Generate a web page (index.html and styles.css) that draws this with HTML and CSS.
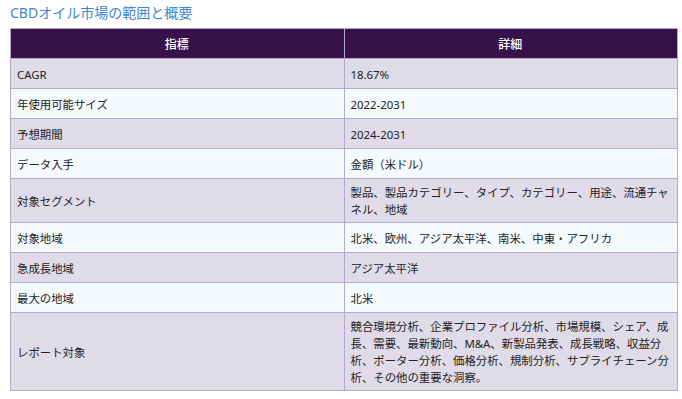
FILE: index.html
```html
<!DOCTYPE html>
<html lang="ja">
<head>
<meta charset="utf-8">
<title>CBDオイル市場の範囲と概要</title>
<link rel="stylesheet" href="styles.css">
</head>
<body>
<div class="page">
  <h2 class="title">CBDオイル市場の範囲と概要</h2>
  <table class="scope">
    <thead>
      <tr><th>指標</th><th>詳細</th></tr>
    </thead>
    <tbody>
      <tr><td>CAGR</td><td>18.67%</td></tr>
      <tr><td>年使用可能サイズ</td><td>2022-2031</td></tr>
      <tr><td>予想期間</td><td>2024-2031</td></tr>
      <tr><td>データ入手</td><td>金額（米ドル）</td></tr>
      <tr><td>対象セグメント</td><td>製品、製品カテゴリー、タイプ、カテゴリー、用途、流通チャネル、地域</td></tr>
      <tr><td>対象地域</td><td>北米、欧州、アジア太平洋、南米、中東・アフリカ</td></tr>
      <tr><td>急成長地域</td><td>アジア太平洋</td></tr>
      <tr><td>最大の地域</td><td>北米</td></tr>
      <tr><td>レポート対象</td><td>競合環境分析、企業プロファイル分析、市場規模、シェア、成長、需要、最新動向、M&amp;A、新製品発表、成長戦略、収益分析、ポーター分析、価格分析、規制分析、サプライチェーン分析、その他の重要な洞察。</td></tr>
    </tbody>
  </table>
</div>
</body>
</html>
```

FILE: styles.css
```css
html, body {
  margin: 0;
  padding: 0;
  background: #ffffff;
}

.page {
  padding: 3px 4px 0 10px;
  font-family: "Noto Sans", "Noto Sans CJK JP", sans-serif;
}

.title {
  margin: 0 0 5px 0;
  font-size: 14px;
  line-height: 20px;
  font-weight: normal;
  color: #3f86cf;
}

.scope {
  width: 668px;
  border-collapse: collapse;
  table-layout: fixed;
  font-size: 11.4px;
  line-height: 17px;
  color: #222222;
}

.scope th,
.scope td {
  border: 1px solid #b4aacd;
  padding: 5px 7px 4px 6px;
  vertical-align: middle;
  text-align: left;
}

.scope th {
  width: 50%;
  background: #37114a;
  color: #ffffff;
  text-align: center;
  font-weight: 500;
  font-size: 12px;
}

.scope thead tr {
  height: 30px;
}

.scope tbody tr {
  height: 30px;
}

.scope tbody tr:nth-child(odd) {
  background: #dfdbe8;
}

.scope tbody tr:nth-child(even) {
  background: #f4f9fc;
}
```
